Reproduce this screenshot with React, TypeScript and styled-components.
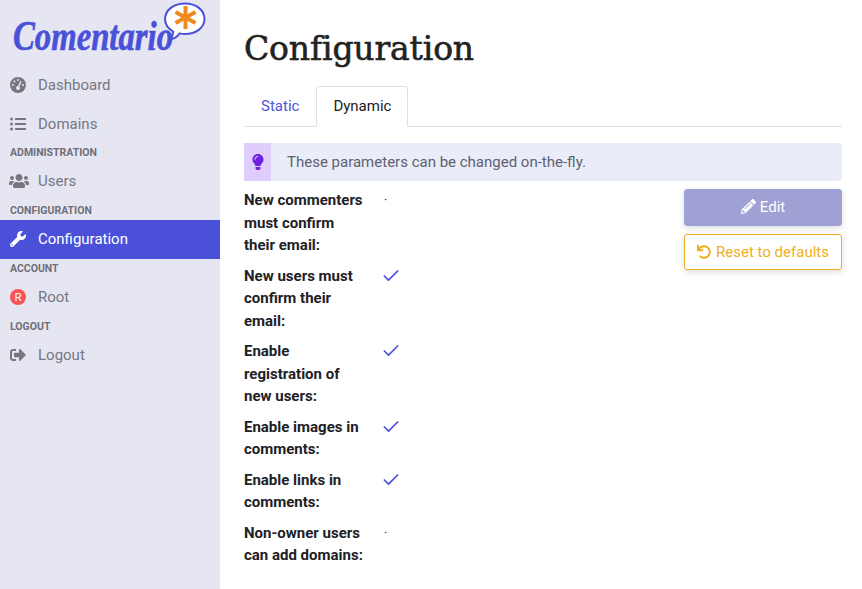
import styled, { createGlobalStyle } from "styled-components";
import { Check } from "lucide-react";
import {
  FaListUl,
  FaUsers,
  FaWrench,
  FaSignOutAlt,
  FaLightbulb,
  FaPencilAlt,
  FaUndo,
} from "react-icons/fa";
import { FaGaugeHigh } from "react-icons/fa6";
import { Fragment } from "react";

const GlobalStyle = createGlobalStyle`
  html, body { margin: 0; padding: 0; background: #fff; }
  body { font-family: Roboto, "Liberation Sans", sans-serif; font-size: 15px; color: #1c1c1e; }
  * { box-sizing: border-box; }
`;

const Page = styled.div`
  display: flex;
  width: 862px;
  height: 589px;
  overflow: hidden;
`;

// Sidebar
const Sidebar = styled.nav`
  width: 220px;
  flex-shrink: 0;
  background: #e6e6f3;
`;
const LogoBox = styled.div`
  height: 65px;
`;
const SectionLabel = styled.div`
  height: 19px;
  line-height: 19px;
  padding-left: 10px;
  font-size: 10.5px;
  font-weight: 700;
  color: #6f6f77;
  text-transform: uppercase;
`;
const NavItem = styled.div<{ $active?: boolean }>`
  display: flex;
  align-items: center;
  height: 39px;
  padding-left: 10px;
  color: ${(p) => (p.$active ? "#fff" : "#77777f")};
  background: ${(p) => (p.$active ? "#4a51d8" : "transparent")};
  ${SectionLabel} + & {
    padding-bottom: 2px;
  }
`;
const NavIcon = styled.span`
  width: 28px;
  display: flex;
  align-items: center;
  font-size: 16px;
`;
const UsersIcon = styled(FaUsers)`
  width: 20px;
  height: 20px;
  margin-left: -1px;
  margin-right: -3px;
  flex-shrink: 0;
`;
const Avatar = styled.span`
  width: 16px;
  height: 16px;
  border-radius: 50%;
  background: #fb5355;
  color: #fff;
  font-size: 11.5px;
  display: flex;
  align-items: center;
  justify-content: center;
`;

// Main
const Main = styled.main`
  flex: 1;
  padding: 0 20px 0 24px;
`;
const Title = styled.h1`
  margin: 0;
  height: 86px;
  padding-top: 26px;
  font-family: "DejaVu Serif", serif;
  font-size: 33px;
  line-height: 46px;
  font-weight: 400;
  letter-spacing: -0.15px;
  -webkit-text-stroke: 0.6px #222;
  color: #222;
`;
const Tabs = styled.div`
  display: flex;
  height: 41px;
  border-bottom: 1px solid #dee2e6;
`;
const Tab = styled.div<{ $active?: boolean }>`
  height: 41px;
  padding: 0 16px;
  line-height: 39px;
  border: 1px solid ${(p) => (p.$active ? "#dee2e6" : "transparent")};
  border-bottom-color: ${(p) => (p.$active ? "#fff" : "transparent")};
  border-radius: 3px 3px 0 0;
  background: ${(p) => (p.$active ? "#fff" : "transparent")};
  color: ${(p) => (p.$active ? "#1c1c1e" : "#4f55d9")};
`;
const Notice = styled.div`
  display: flex;
  align-items: center;
  height: 38px;
  margin-top: 16px;
  background: #ebecf9;
  border-radius: 0 4px 4px 0;
  color: #5c6270;
`;
const NoticeIcon = styled.span`
  width: 27px;
  height: 100%;
  margin-right: 16px;
  display: flex;
  align-items: center;
  justify-content: center;
  background: #dfcdfb;
  color: #6f1fe0;
  font-size: 16px;
`;
const Content = styled.div`
  display: flex;
  justify-content: space-between;
  margin-top: 8px;
`;
const Params = styled.div`
  display: grid;
  grid-template-columns: 120px 20px;
  column-gap: 20px;
  row-gap: 8px;
  align-content: start;
`;
const ParamLabel = styled.div`
  font-weight: 700;
  line-height: 22.5px;
  color: #212125;
`;
const ParamValue = styled.div`
  height: 22.5px;
  display: flex;
  align-items: center;
  color: #4a51d8;
`;
const CheckMark = styled(Check)`
  margin-left: -3px;
  flex-shrink: 0;
`;
const Dot = styled.span`
  color: #222;
  font-size: 12px;
`;
const Actions = styled.div`
  width: 158px;
  display: flex;
  flex-direction: column;
  gap: 8px;
`;
const Button = styled.button<{ $outline?: boolean }>`
  display: flex;
  align-items: center;
  justify-content: center;
  gap: ${(p) => (p.$outline ? "5px" : "4px")};
  padding: 0 0 ${(p) => (p.$outline ? "0" : "2px")};
  width: 100%;
  height: ${(p) => (p.$outline ? "36px" : "37px")};
  font-family: inherit;
  font-size: 15px;
  border-radius: 3px;
  border: 1px solid ${(p) => (p.$outline ? "#eeb021" : "#9fa0d3")};
  background: ${(p) => (p.$outline ? "#fff" : "#9fa0d3")};
  color: ${(p) => (p.$outline ? "#eeb021" : "#fff")};
  box-shadow: 0 2px 6px rgba(0, 0, 0, 0.14);
`;

function Logo() {
  return (
    <svg width="220" height="65" viewBox="0 0 220 65">
      <g transform="translate(12 0)">
        <path
          d="M153 19c0-9 9-15.500 20-15.500s19.500 6.500 19.500 15.500-9 15-19.500 15c-2 0-4-.2-5.500-.6-1.500 2.500-4.500 5-9.500 6.100 2-2 3-4.500 3.200-8C156 28.500 153 24 153 19z"
          fill="#fff"
          stroke="#4a51d8"
          strokeWidth="2"
        />
        <g stroke="#f08a1d" strokeWidth="4">
          <path d="M173.500 6v23" />
          <path d="M163.500 12l20 11" />
          <path d="M183.500 12l-20 11" />
        </g>
      </g>
      <text
        transform="translate(13 50) scale(1 1.08)"
        textLength="160"
        lengthAdjust="spacingAndGlyphs"
        fontFamily="'Liberation Serif', serif"
        fontStyle="italic"
        fontWeight="700"
        fontSize="40"
        fill="#4a51d8"
        stroke="#4a51d8"
        strokeWidth="0.6"
      >
        Comentario
      </text>
    </svg>
  );
}

const params = [
  { label: "New commenters must confirm their email:", on: false },
  { label: "New users must confirm their email:", on: true },
  { label: "Enable registration of new users:", on: true },
  { label: "Enable images in comments:", on: true },
  { label: "Enable links in comments:", on: true },
  { label: "Non-owner users can add domains:", on: false },
];

export default function App() {
  return (
    <>
      <GlobalStyle />
      <Page>
        <Sidebar>
          <LogoBox>
            <Logo />
          </LogoBox>
          <NavItem>
            <NavIcon><FaGaugeHigh /></NavIcon>Dashboard
          </NavItem>
          <NavItem>
            <NavIcon><FaListUl /></NavIcon>Domains
          </NavItem>
          <SectionLabel>Administration</SectionLabel>
          <NavItem>
            <NavIcon><UsersIcon /></NavIcon>Users
          </NavItem>
          <SectionLabel>Configuration</SectionLabel>
          <NavItem $active>
            <NavIcon><FaWrench /></NavIcon>Configuration
          </NavItem>
          <SectionLabel>Account</SectionLabel>
          <NavItem>
            <NavIcon><Avatar>R</Avatar></NavIcon>Root
          </NavItem>
          <SectionLabel>Logout</SectionLabel>
          <NavItem>
            <NavIcon><FaSignOutAlt /></NavIcon>Logout
          </NavItem>
        </Sidebar>
        <Main>
          <Title>Configuration</Title>
          <Tabs>
            <Tab>Static</Tab>
            <Tab $active>Dynamic</Tab>
          </Tabs>
          <Notice>
            <NoticeIcon><FaLightbulb /></NoticeIcon>
            These parameters can be changed on-the-fly.
          </Notice>
          <Content>
            <Params>
              {params.map((p) => (
                <Fragment key={p.label}>
                  <ParamLabel>{p.label}</ParamLabel>
                  <ParamValue>
                    {p.on ? <CheckMark size={20} strokeWidth={2} /> : <Dot>·</Dot>}
                  </ParamValue>
                </Fragment>
              ))}
            </Params>
            <Actions>
              <Button><FaPencilAlt size={15} />Edit</Button>
              <Button $outline><FaUndo size={14} />Reset to defaults</Button>
            </Actions>
          </Content>
        </Main>
      </Page>
    </>
  );
}
